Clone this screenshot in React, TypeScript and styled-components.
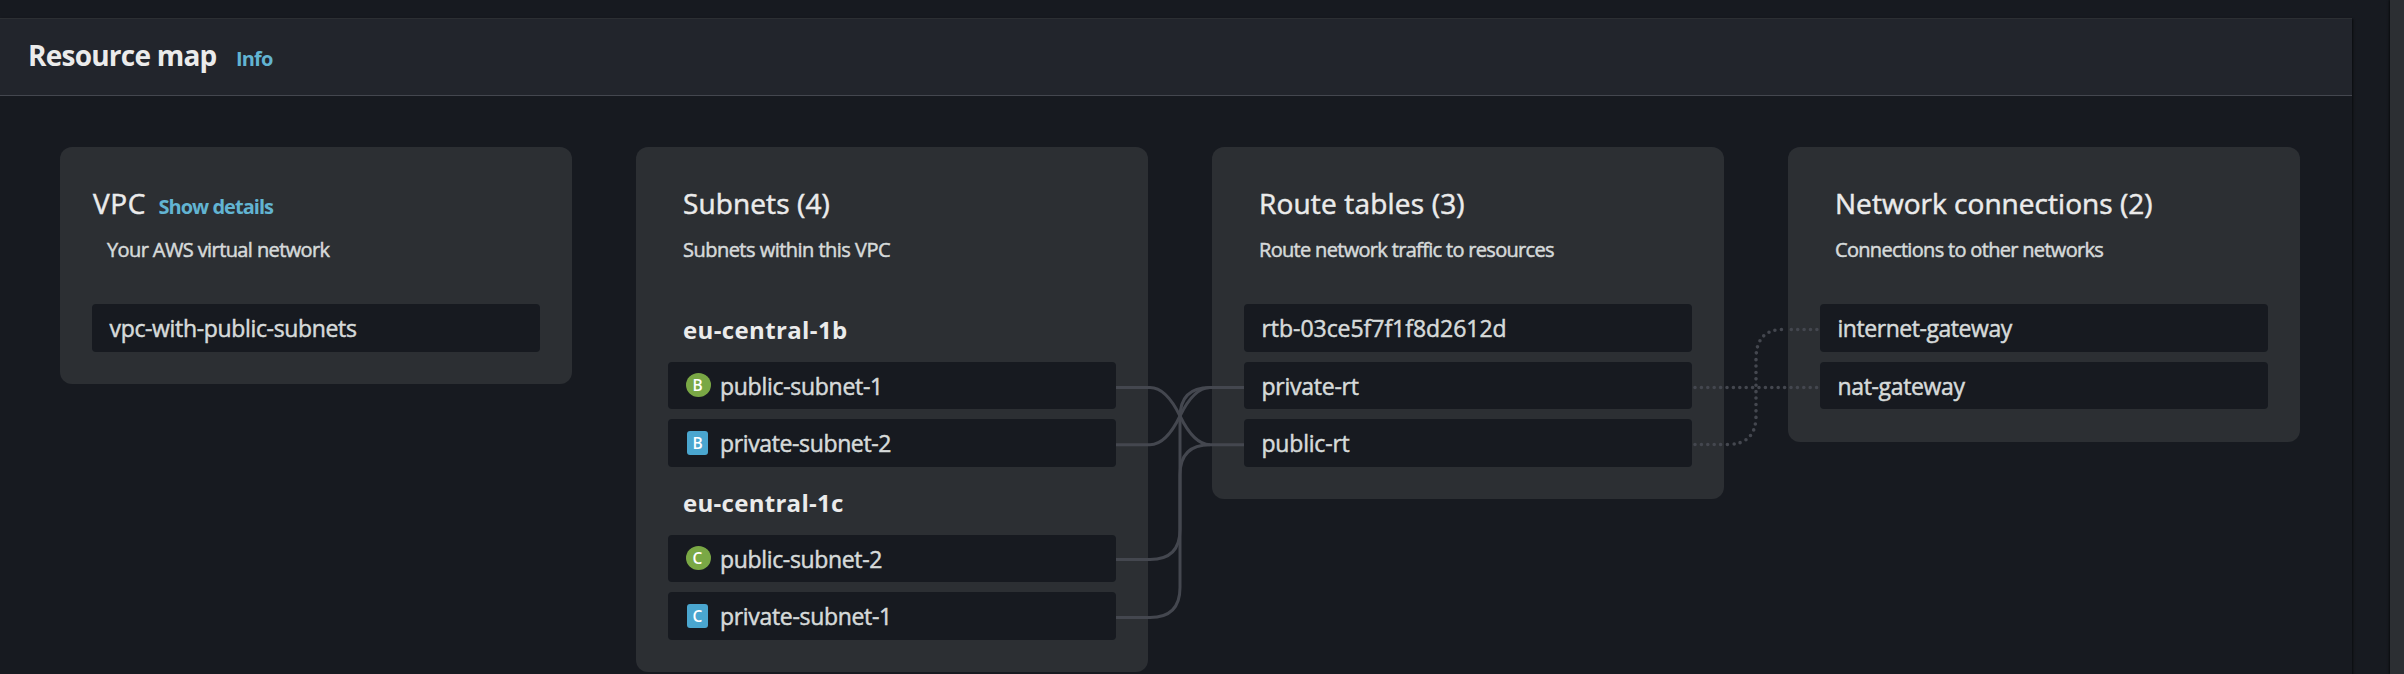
import React from "react";
import styled, { createGlobalStyle, css } from "styled-components";

const color = {
  page: "#171a20",
  header: "#22252c",
  card: "#2c2f33",
  line: "#44474f",
  heading: "#ebebeb",
  text: "#d6dada",
  link: "#62b4d2",
  public: "#7aa845",
  private: "#4aa6cf",
};

const GlobalStyle = createGlobalStyle`
  * { box-sizing: border-box; }
  body {
    margin: 0;
    background: ${color.page};
    font-family: "Open Sans", "Noto Sans", sans-serif;
    font-kerning: normal;
    font-variant-ligatures: none;
    overflow: hidden;
  }
`;

type Tracked = { $tracking?: number };
const tracking = css<Tracked>`
  letter-spacing: ${({ $tracking = 0 }) => $tracking}px;
  white-space: nowrap;
`;

/* thickens the regular weight to a medium one */
const medium = css`
  font-weight: 400;
  -webkit-text-stroke: 0.5px currentColor;
`;

const Page = styled.div`
  display: flex;
  height: 674px;
  overflow: hidden;
`;

const Panel = styled.section`
  flex: none;
  width: 2352px;
  margin-top: 18px;
  height: 700px;
  box-shadow: 1px 1px 2px rgba(0, 0, 0, 0.6);
`;

const PanelHeader = styled.header`
  display: flex;
  align-items: baseline;
  gap: 19.5px;
  height: 78px;
  padding: 16px 28px 0 28px;
  background: ${color.header};
  border-top: 1px solid ${color.card};
  border-bottom: 1px solid ${color.line};
`;

const PanelTitle = styled.h2<Tracked>`
  margin: 0;
  font-size: 28px;
  line-height: 40px;
  font-weight: 700;
  color: ${color.heading};
  ${tracking}
`;

const Link = styled.a<Tracked>`
  font-size: 20px;
  line-height: 28px;
  font-weight: 700;
  color: ${color.link};
  ${tracking}
`;

const SideRail = styled.aside`
  width: 14px;
  margin-left: auto;
  background: ${color.card};
  box-shadow: -1px 0 2px rgba(0, 0, 0, 0.6);
`;

const Map = styled.div`
  position: relative;
  display: flex;
  align-items: flex-start;
  gap: 64px;
  padding: 51px 52px 0 60px;
`;

const Card = styled.article`
  flex: none;
  width: 512px;
  padding: 38px 32px 32.5px;
  border-radius: 12px;
  background: ${color.card};
`;

const CardHeader = styled.header`
  height: 109px;
`;

const TitleRow = styled.div<{ $flush?: boolean }>`
  display: flex;
  align-items: baseline;
  gap: 12.5px;
  padding-left: ${({ $flush }) => ($flush ? 1 : 15)}px;
`;

const CardTitle = styled.h3<Tracked>`
  margin: 0;
  font-size: 28px;
  line-height: 36px;
  color: ${color.heading};
  ${medium}
  ${tracking}
`;

const CardSubtitle = styled.p<Tracked>`
  margin: 15px 0 0 15px;
  font-size: 20px;
  line-height: 28px;
  color: ${color.text};
  ${medium}
  ${tracking}
`;

const Zone = styled.div`
  & + & {
    margin-top: 0.5px;
  }
`;

const ZoneTitle = styled.h4<Tracked>`
  height: 57.5px;
  margin: 0;
  padding: 22px 0 0 15px;
  font-size: 24px;
  line-height: 28px;
  font-weight: 700;
  color: ${color.heading};
  ${tracking}
`;

const Node = styled.div`
  display: flex;
  align-items: center;
  height: 47.5px;
  margin-top: 10px;
  padding-left: 17.5px;
  border-radius: 4px;
  background: ${color.page};
`;

const NodeName = styled.span<Tracked>`
  padding-top: 1px;
  font-size: 23px;
  line-height: 46px;
  color: ${color.text};
  ${medium}
  ${tracking}
`;

const MarkerSlot = styled.span`
  display: flex;
  width: 25px;
  margin: 0 9px 0 0.5px;
`;

const Marker = styled.span<{ $kind: "public" | "private" }>`
  display: flex;
  justify-content: center;
  height: 24px;
  color: #fff;
  font-size: 15.5px;
  line-height: 24px;
  font-weight: 600;
  ${({ $kind }) =>
    $kind === "public"
      ? css`
          width: 25px;
          padding-right: 2px;
          border-radius: 50%;
          background: ${color.public};
        `
      : css`
          width: 21px;
          margin-left: 1px;
          border-radius: 3px;
          background: ${color.private};
        `}
`;

const Connectors = styled.svg`
  position: absolute;
  left: 60px;
  top: 51px;
  width: 2240px;
  height: 527px;
  fill: none;
  stroke: ${color.line};
  stroke-width: 3;
  pointer-events: none;
`;

const Dotted = styled.path`
  stroke-width: 3.6;
  stroke-linecap: round;
  stroke-dasharray: 0 6.4;
`;

type Item = { name: string; tracking: number; kind?: "public" | "private"; letter?: string };

const zones: { name: string; tracking: number; items: Item[] }[] = [
  {
    name: "eu-central-1b",
    tracking: 0.37,
    items: [
      { name: "public-subnet-1", tracking: -0.28, kind: "public", letter: "B" },
      { name: "private-subnet-2", tracking: -0.37, kind: "private", letter: "B" },
    ],
  },
  {
    name: "eu-central-1c",
    tracking: 0.29,
    items: [
      { name: "public-subnet-2", tracking: -0.34, kind: "public", letter: "C" },
      { name: "private-subnet-1", tracking: -0.32, kind: "private", letter: "C" },
    ],
  },
];

const routeTables: Item[] = [
  { name: "rtb-03ce5f7f1f8d2612d", tracking: -0.04 },
  { name: "private-rt", tracking: -0.25 },
  { name: "public-rt", tracking: -0.2 },
];

const gateways: Item[] = [
  { name: "internet-gateway", tracking: -0.45 },
  { name: "nat-gateway", tracking: -0.35 },
];

function ResourceNode({ item }: { item: Item }) {
  return (
    <Node>
      {item.kind && (
        <MarkerSlot>
          <Marker $kind={item.kind}>{item.letter}</Marker>
        </MarkerSlot>
      )}
      <NodeName $tracking={item.tracking}>{item.name}</NodeName>
    </Node>
  );
}

export default function App() {
  return (
    <>
      <GlobalStyle />
      <Page>
        <Panel>
          <PanelHeader>
            <PanelTitle $tracking={-0.77}>Resource map</PanelTitle>
            <Link $tracking={-0.84}>Info</Link>
          </PanelHeader>
          <Map>
            <Card>
              <CardHeader>
                <TitleRow $flush>
                  <CardTitle $tracking={0.6}>VPC</CardTitle>
                  <Link $tracking={-0.98}>Show details</Link>
                </TitleRow>
                <CardSubtitle $tracking={-0.6}>Your AWS virtual network</CardSubtitle>
              </CardHeader>
              <ResourceNode item={{ name: "vpc-with-public-subnets", tracking: -0.34 }} />
            </Card>

            <Card>
              <CardHeader>
                <TitleRow>
                  <CardTitle $tracking={0.11}>Subnets (4)</CardTitle>
                </TitleRow>
                <CardSubtitle $tracking={-0.52}>Subnets within this VPC</CardSubtitle>
              </CardHeader>
              {zones.map((zone) => (
                <Zone key={zone.name}>
                  <ZoneTitle $tracking={zone.tracking}>{zone.name}</ZoneTitle>
                  {zone.items.map((item) => (
                    <ResourceNode key={item.name} item={item} />
                  ))}
                </Zone>
              ))}
            </Card>

            <Card>
              <CardHeader>
                <TitleRow>
                  <CardTitle $tracking={0.18}>Route tables (3)</CardTitle>
                </TitleRow>
                <CardSubtitle $tracking={-0.68}>Route network traffic to resources</CardSubtitle>
              </CardHeader>
              {routeTables.map((item) => (
                <ResourceNode key={item.name} item={item} />
              ))}
            </Card>

            <Card>
              <CardHeader>
                <TitleRow>
                  <CardTitle $tracking={0.04}>Network connections (2)</CardTitle>
                </TitleRow>
                <CardSubtitle $tracking={-0.68}>Connections to other networks</CardSubtitle>
              </CardHeader>
              {gateways.map((item) => (
                <ResourceNode key={item.name} item={item} />
              ))}
            </Card>

            <Connectors viewBox="60 147 2240 527">
              <path d="M1116 387.5H1150Q1166 387.5 1180 416Q1194 444.7 1210 444.7H1244" />
              <path d="M1116 444.7H1150Q1166 444.7 1180 416Q1194 387.5 1210 387.5H1244" />
              <path d="M1116 559.5H1150Q1180 559.5 1180 529.5V474.7Q1180 444.7 1210 444.7" />
              <path d="M1116 617.4H1150Q1180 617.4 1180 587.4V417.5Q1180 387.5 1210 387.5" />
              <Dotted d="M1695 387.5H1818" />
              <Dotted d="M1695 444.5H1724" />
              <Dotted d="M1727.4 444.5Q1756 444.5 1756 416V359Q1756 329.5 1783 329.5" />
              <Dotted d="M1791.3 329.5H1818" />
            </Connectors>
          </Map>
        </Panel>
        <SideRail />
      </Page>
    </>
  );
}
